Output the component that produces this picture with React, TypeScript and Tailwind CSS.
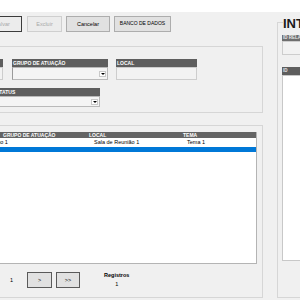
function Btn({ label, w, kind }: { label: string; w: string; kind: "default" | "disabled" | "normal" | "nav" }) {
  const styles = {
    default: "border-[#3c3c3c] bg-[#ececec] text-[#a8a8a8]",
    disabled: "border-[#cfcfcf] bg-[#ececec] text-[#a8a8a8]",
    normal: "border-[#adadad] bg-[#e1e1e1] text-black",
    nav: "border-[#5a5a5a] bg-[#e1e1e1] text-black",
  }[kind];
  return (
    <div
      className={`flex h-[16px] shrink-0 items-center justify-center whitespace-nowrap border ${styles} ${w}`}
    >
      {label}
    </div>
  );
}

function LabelBar({ text, className = "" }: { text: string; className?: string }) {
  return (
    <div className={`h-[8px] overflow-hidden whitespace-nowrap bg-[#5e5e5e] text-[5px] font-bold leading-[8px] text-white ${className}`}>
      {text}
    </div>
  );
}

function Arrow() {
  return (
    <div className="flex h-[6px] w-[7px] items-center justify-center border border-[#c8c8c8] bg-white">
      <div className="h-0 w-0 border-x-[2px] border-t-[2px] border-x-transparent border-t-black" />
    </div>
  );
}

export default function App() {
  return (
    <div className="h-[300px] w-[300px] overflow-hidden bg-[#f0f0f0] font-['Liberation_Sans',Arial,sans-serif] text-[5.5px] text-black">
      <div className="h-[12px] bg-white" />
      <div className="flex">
        {/* left side */}
        <div className="w-[263px] shrink-0">
          <div className="ml-[-18px] mt-[4px] flex gap-[5px]">
            <Btn label="Salvar" w="w-[40px]" kind="default" />
            <Btn label="Excluir" w="w-[35px]" kind="disabled" />
            <Btn label="Cancelar" w="w-[44px] ml-[-1px]" kind="normal" />
            <Btn label="BANCO DE DADOS" w="w-[57px] ml-[-1px] text-[5px]" kind="normal" />
          </div>

          {/* filters */}
          <div className="ml-[-10px] mt-[14px] h-[67px] w-[273px] border border-[#d6d6d6]">
            <div className="mt-[12px] flex">
              <div className="ml-[-28px] w-[40px]">
                <LabelBar text="" />
                <div className="h-[13px] border border-[#cdcdcd] bg-[#f2f2f2]" />
              </div>
              <div className="ml-[9px] w-[96px]">
                <LabelBar text="GRUPO DE ATUAÇÃO" className="pl-[1px]" />
                <div className="flex h-[13px] items-center justify-end border border-[#b9b9b9] border-l-[#9a9a9a] bg-[#f4f4f4] pr-[1px]">
                  <Arrow />
                </div>
              </div>
              <div className="ml-[8px] w-[81px]">
                <LabelBar text="LOCAL" className="pl-[1px]" />
                <div className="h-[13px] border border-[#cdcdcd] bg-[#f2f2f2]" />
              </div>
            </div>
            <div className="mt-[8px] flex">
              <div className="ml-[-28px] w-[137px]">
                <LabelBar text="STATUS" className="pl-[33px]" />
                <div className="flex h-[11px] items-center justify-end border border-[#b9b9b9] bg-[#f4f4f4] pr-[1px]">
                  <Arrow />
                </div>
              </div>
            </div>
          </div>

          {/* grid */}
          <div className="ml-[-10px] mt-[12px] h-[173px] w-[273px] border border-[#d6d6d6]">
            <div className="ml-[-22px] mt-[6px] h-[132px] w-[288px] border border-[#b4b4b4] border-t-0 bg-white">
              <div className="flex h-[6px] whitespace-nowrap bg-[#646464] text-[5px] font-bold leading-[6px] text-white">
                <div className="w-[116px] pl-[33px]">GRUPO DE ATUAÇÃO</div>
                <div className="w-[90px] pl-[3px]">LOCAL</div>
                <div className="w-[40px] pl-[7px]">TEMA</div>
              </div>
              <div className="flex h-[8px] items-center whitespace-nowrap leading-[8px]">
                <div className="w-[116px] pl-[18px]">Grupo 1</div>
                <div className="w-[90px] pl-[8px]">Sala de Reunião 1</div>
                <div className="w-[40px] pl-[11px]">Tema 1</div>
              </div>
              <div className="mt-[1px] h-[5px] bg-[#0078d7]" />
            </div>
            <div className="mt-[7px] flex items-center">
              <div className="ml-[19px] w-[17px]">1</div>
              <Btn label=">" w="w-[25px]" kind="nav" />
              <Btn label=">>" w="w-[24px] ml-[4px]" kind="nav" />
              <div className="ml-[24px] flex flex-col items-center leading-[9px]">
                <span className="font-bold">Registros</span>
                <span>1</span>
              </div>
            </div>
          </div>
        </div>

        {/* right side */}
        <div className="relative ml-[14px] mt-[10px] h-[276px] w-[40px] shrink-0 border border-r-0 border-[#d6d6d6]">
          <div className="absolute left-[5px] top-[-6px] whitespace-nowrap bg-[#f0f0f0] pr-[1px] text-[13px] font-bold leading-[13px] text-[#1a1a1a]">
            INTEGRANTES
          </div>
          <div className="ml-[4px] mt-[12px]">
            <div className="h-[6px] overflow-hidden whitespace-nowrap bg-[#6e6e6e] pl-[1px] text-[4.5px] font-bold leading-[6px] text-[#e8e8e8]">ID RELACIONAMENTO</div>
            <div className="h-[14px] border border-[#cdcdcd] bg-[#f2f2f2]" />
            <div className="mt-[12px] h-[8px] overflow-hidden whitespace-nowrap bg-[#5e5e5e] pl-[1px] text-[4.5px] font-bold leading-[8px] text-[#e8e8e8]">ID</div>
            <div className="h-[186px] border border-[#c8c8c8] bg-white" />
          </div>
        </div>
      </div>
    </div>
  );
}
